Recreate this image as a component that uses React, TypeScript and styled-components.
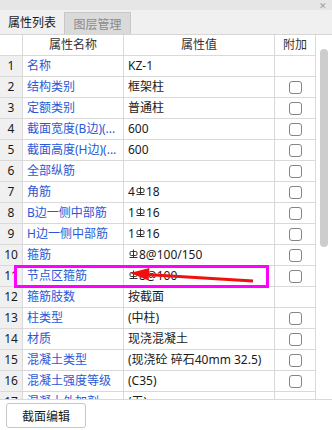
import React from "react";
import styled, { createGlobalStyle } from "styled-components";

const GlobalStyle = createGlobalStyle`
    html, body {
        margin: 0;
        padding: 0;
        background: #ffffff;
    }
    body {
        font-family: "Noto Sans", "Noto Sans CJK SC", sans-serif;
        font-size: 12px;
        color: #1a1a1a;
    }
`;

const Panel = styled.div`
    width: 332px;
    height: 430px;
    display: flex;
    flex-direction: column;
    background: #ffffff;
    overflow: hidden;
`;

const TitleStrip = styled.div`
    height: 10px;
    background: #e6e6e6;
    display: flex;
    justify-content: flex-end;
    align-items: flex-start;
    padding-right: 5px;
`;

const CloseMark = styled.span`
    font-size: 9px;
    line-height: 10px;
    color: #a0a0a0;
    margin-top: 1px;
`;

const TabBar = styled.div`
    height: 25px;
    box-sizing: border-box;
    background: #f0f0f0;
    border-bottom: 1px solid #d6d6d6;
    display: flex;
    align-items: flex-end;
`;

const Tab = styled.div<{ $active?: boolean }>`
    width: ${(p) => (p.$active ? "64px" : "67px")};
    height: ${(p) => (p.$active ? "24px" : "22px")};
    box-sizing: border-box;
    display: flex;
    align-items: center;
    justify-content: center;
    font-size: 12px;
    color: ${(p) => (p.$active ? "#1a1a1a" : "#8a8a8a")};
    background: ${(p) => (p.$active ? "#f0f0f0" : "#dadada")};
    border: ${(p) => (p.$active ? "none" : "1px solid #c8c8c8")};
    border-bottom: none;
`;

const TableArea = styled.div`
    position: relative;
    height: 365px;
    box-sizing: border-box;
    border-bottom: 1px solid #d9d9d9;
    display: flex;
    overflow: hidden;
`;

const Grid = styled.div`
    width: 316px;
    display: flex;
    flex-direction: column;
`;

const Row = styled.div`
    display: grid;
    grid-template-columns: 23px 101px 151px 41px;
    height: 21px;
    flex-shrink: 0;
`;

const Cell = styled.div<{ $kind: "index" | "name" | "value" | "check" | "head" }>`
    box-sizing: border-box;
    border-right: 1px solid #d9d9d9;
    border-bottom: 1px solid #d9d9d9;
    height: 21px;
    line-height: 20px;
    white-space: nowrap;
    overflow: hidden;
    display: flex;
    align-items: center;
    justify-content: ${(p) =>
        p.$kind === "name" || p.$kind === "value" ? "flex-start" : "center"};
    padding-left: ${(p) => (p.$kind === "name" ? "4px" : p.$kind === "value" ? "4px" : "0")};
    background: ${(p) => (p.$kind === "index" ? "#f0f0f0" : "#ffffff")};
    color: ${(p) =>
        p.$kind === "name" ? "#2a58d6" : p.$kind === "head" ? "#333333" : "#1a1a1a"};
    font-size: 12px;
`;

const CheckBox = styled.span`
    width: 13px;
    height: 13px;
    box-sizing: border-box;
    border: 1px solid #858585;
    border-radius: 3px;
    background: #ffffff;
`;

const ScrollTrack = styled.div`
    width: 16px;
    background: #ffffff;
    position: relative;
    padding-top: 14px;
    padding-left: 4px;
    box-sizing: border-box;
`;

const ScrollThumb = styled.div`
    width: 8px;
    height: 198px;
    border-radius: 4px;
    background: #cdcdcd;
`;

const Highlight = styled.div`
    position: absolute;
    left: 14px;
    top: 230px;
    width: 255px;
    height: 23px;
    box-sizing: border-box;
    border: 3px solid #ff00ff;
    pointer-events: none;
`;

const ArrowLayer = styled.svg`
    position: absolute;
    left: 0;
    top: 0;
    pointer-events: none;
`;

const Footer = styled.div`
    flex: 1;
    padding: 3px 0 0 6px;
    background: #ffffff;
`;

const EditButton = styled.button`
    width: 80px;
    height: 25px;
    box-sizing: border-box;
    border: 1px solid #c6c6c6;
    border-radius: 3px;
    background: #ffffff;
    font-family: "Noto Sans", "Noto Sans CJK SC", sans-serif;
    font-size: 12px;
    color: #1a1a1a;
    padding: 0;
`;

const RebarMark = styled.svg`
    width: 9px;
    height: 10px;
    margin: 0 1px 0 1px;
    align-self: flex-start;
    margin-top: 4px;
`;

const Rebar = () => (
    <RebarMark viewBox="0 0 9 10">
        <rect x="1" y="2.5" width="7" height="4" rx="1.2" fill="none" stroke="#333" strokeWidth="1" />
        <line x1="4.5" y1="0.5" x2="4.5" y2="8.5" stroke="#333" strokeWidth="1" />
        <line x1="0.5" y1="8.5" x2="8.5" y2="8.5" stroke="#333" strokeWidth="1" />
    </RebarMark>
);

type RowData = { name: string; value: string; check: boolean };

const rows: RowData[] = [
    { name: "名称", value: "KZ-1", check: false },
    { name: "结构类别", value: "框架柱", check: true },
    { name: "定额类别", value: "普通柱", check: true },
    { name: "截面宽度(B边)(...", value: "600", check: true },
    { name: "截面高度(H边)(...", value: "600", check: true },
    { name: "全部纵筋", value: "", check: true },
    { name: "角筋", value: "4%18", check: true },
    { name: "B边一侧中部筋", value: "1%16", check: true },
    { name: "H边一侧中部筋", value: "1%16", check: true },
    { name: "箍筋", value: "%8@100/150", check: true },
    { name: "节点区箍筋", value: "%8@100", check: true },
    { name: "箍筋肢数", value: "按截面", check: false },
    { name: "柱类型", value: "(中柱)", check: true },
    { name: "材质", value: "现浇混凝土", check: true },
    { name: "混凝土类型", value: "(现浇砼 碎石40mm 32.5)", check: true },
    { name: "混凝土强度等级", value: "(C35)", check: true },
    { name: "混凝土外加剂", value: "(无)", check: false },
];

const renderValue = (value: string) => {
    const parts = value.split("%");
    return parts.map((part, i) => (
        <React.Fragment key={i}>
            {i > 0 && <Rebar />}
            {part}
        </React.Fragment>
    ));
};

const App = () => {
    return (
        <Panel>
            <GlobalStyle />
            <TitleStrip>
                <CloseMark>✕</CloseMark>
            </TitleStrip>
            <TabBar>
                <Tab $active>属性列表</Tab>
                <Tab>图层管理</Tab>
            </TabBar>
            <TableArea>
                <Grid>
                    <Row>
                        <Cell $kind="head"></Cell>
                        <Cell $kind="head">属性名称</Cell>
                        <Cell $kind="head">属性值</Cell>
                        <Cell $kind="head">附加</Cell>
                    </Row>
                    {rows.map((row, i) => (
                        <Row key={i}>
                            <Cell $kind="index">{i + 1}</Cell>
                            <Cell $kind="name">{row.name}</Cell>
                            <Cell $kind="value">{renderValue(row.value)}</Cell>
                            <Cell $kind="check">{row.check && <CheckBox />}</Cell>
                        </Row>
                    ))}
                </Grid>
                <ScrollTrack>
                    <ScrollThumb />
                </ScrollTrack>
                <Highlight />
                <ArrowLayer width="332" height="365" viewBox="0 0 332 365">
                    <line x1="146" y1="239.5" x2="253" y2="246" stroke="#f01010" strokeWidth="3" />
                    <polygon points="130,238 149.4,233 148.6,245.5" fill="#f01010" />
                </ArrowLayer>
            </TableArea>
            <Footer>
                <EditButton>截面编辑</EditButton>
            </Footer>
        </Panel>
    );
};

export default App;
